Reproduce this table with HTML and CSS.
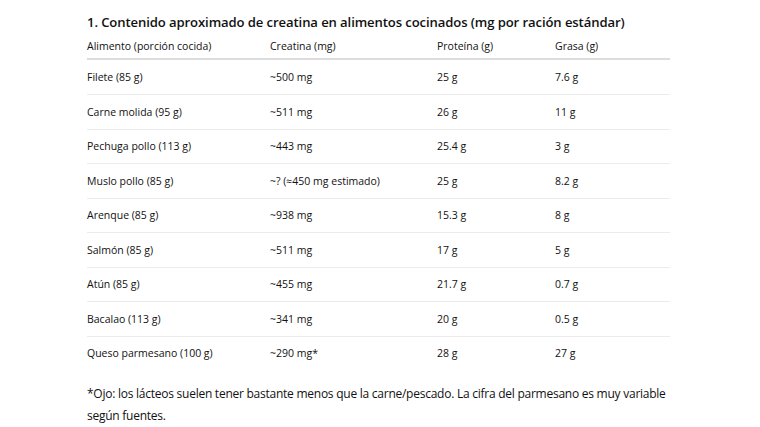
FILE: index.html
```html
<!DOCTYPE html>
<html lang="es">
<head>
<meta charset="utf-8">
<link rel="stylesheet" href="styles.css">
</head>
<body>
<main class="page">
  <h3 class="title">1. Contenido aproximado de creatina en alimentos cocinados (mg por ración estándar)</h3>
  <table class="data">
    <thead>
      <tr><th>Alimento (porción cocida)</th><th>Creatina (mg)</th><th>Proteína (g)</th><th>Grasa (g)</th></tr>
    </thead>
    <tbody>
      <tr><td>Filete (85 g)</td><td>~500 mg</td><td>25 g</td><td>7.6 g</td></tr>
      <tr><td>Carne molida (95 g)</td><td>~511 mg</td><td>26 g</td><td>11 g</td></tr>
      <tr><td>Pechuga pollo (113 g)</td><td>~443 mg</td><td>25.4 g</td><td>3 g</td></tr>
      <tr><td>Muslo pollo (85 g)</td><td>~? (≈450 mg estimado)</td><td>25 g</td><td>8.2 g</td></tr>
      <tr><td>Arenque (85 g)</td><td>~938 mg</td><td>15.3 g</td><td>8 g</td></tr>
      <tr><td>Salmón (85 g)</td><td>~511 mg</td><td>17 g</td><td>5 g</td></tr>
      <tr><td>Atún (85 g)</td><td>~455 mg</td><td>21.7 g</td><td>0.7 g</td></tr>
      <tr><td>Bacalao (113 g)</td><td>~341 mg</td><td>20 g</td><td>0.5 g</td></tr>
      <tr><td>Queso parmesano (100 g)</td><td>~290 mg*</td><td>28 g</td><td>27 g</td></tr>
    </tbody>
  </table>
  <p class="note">*Ojo: los lácteos suelen tener bastante menos que la carne/pescado. La cifra del parmesano es muy variable según fuentes.</p>
</main>
</body>
</html>
```
FILE: styles.css
```css
html, body { margin: 0; padding: 0; background: #fff; }
body { font-family: "Open Sans", "Noto Sans", sans-serif; color: #111; }
.page { width: 583px; padding: 12px 0 0 87px; }
.title { margin: 0 0 1px 0; font-size: 13.1px; font-weight: 600; line-height: 20px; letter-spacing: -0.1px; white-space: nowrap; }
.data { width: 583px; border-collapse: collapse; font-size: 10.5px; }
.data th, .data td { text-align: left; padding: 0; font-weight: 400; }
.data th { height: 25px; border-bottom: 2px solid #dcdcdc; vertical-align: middle; }
.data td { height: 33.5px; border-bottom: 1px solid #ececec; vertical-align: middle; }
.data tbody tr:first-child td { height: 34px; }
.data tbody tr:last-child td { border-bottom: none; }
.data th:nth-child(1) { width: 183px; }
.data th:nth-child(2) { width: 167px; }
.data th:nth-child(3) { width: 118px; }
.note { margin: 13px 0 0 0; font-size: 12px; letter-spacing: -0.25px; line-height: 22px; width: 583px; }
```
